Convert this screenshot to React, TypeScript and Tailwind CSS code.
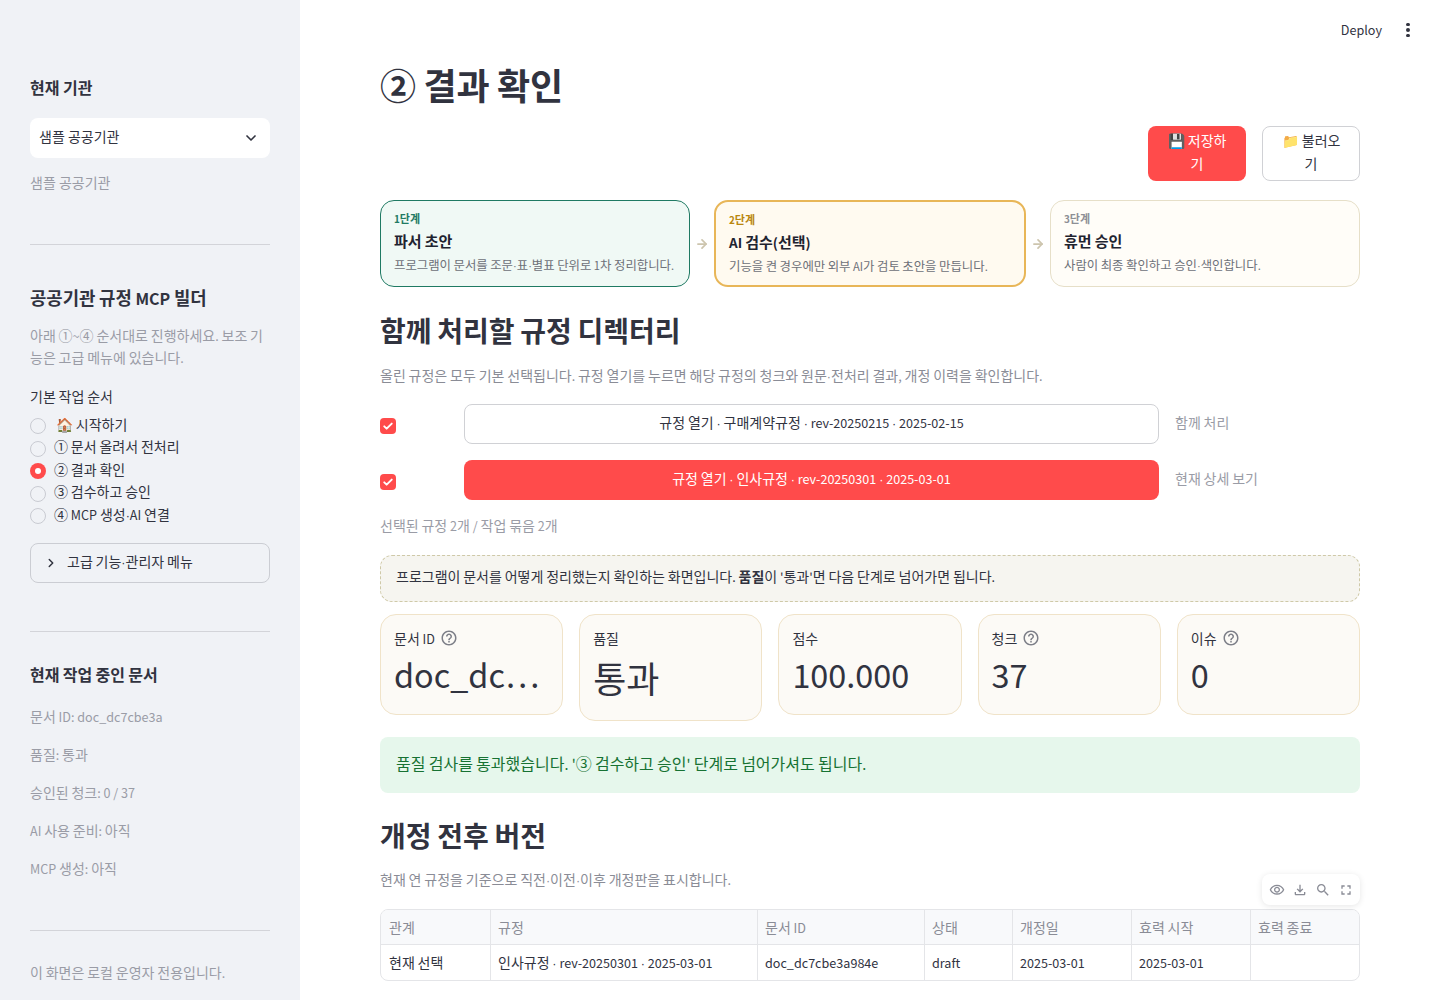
import { ChevronDown, ChevronRight, ArrowRight } from 'lucide-react';
import type { ReactNode } from 'react';

const font = "font-['Noto_Sans_CJK_KR','Noto_Sans',sans-serif]";

// latin runs in the CJK face come out too big, so scale them back down
function t(text: string): ReactNode[] {
  return text.split(/([\x20-\x7e…]+|·)/).map((part, i) => {
    if (part === '·') return <span key={i} className="font-['Liberation_Sans'] text-[0.9em] leading-none">·</span>;
    if (/^[\x20-\x7e…]+$/.test(part)) return <span key={i} className="text-[0.9em] leading-none">{part}</span>;
    return part;
  });
}

const steps = [
  { label: '🏠 시작하기', indent: true },
  { label: '① 문서 올려서 전처리' },
  { label: '② 결과 확인', active: true },
  { label: '③ 검수하고 승인' },
  { label: '④ MCP 생성·AI 연결' },
];

const docInfo = ['문서 ID: doc_dc7cbe3a', '품질: 통과', '승인된 청크: 0 / 37', 'AI 사용 준비: 아직', 'MCP 생성: 아직'];

const metrics = [
  { label: '문서 ID', value: 'doc_dc…', help: true },
  { label: '품질', value: '통과', tall: true },
  { label: '점수', value: '100.000' },
  { label: '청크', value: '37', help: true },
  { label: '이슈', value: '0', help: true },
];

const columns = ['관계', '규정', '문서 ID', '상태', '개정일', '효력 시작', '효력 종료'];
const row = ['현재 선택', '인사규정 · rev-20250301 · 2025-03-01', 'doc_dc7cbe3a984e', 'draft', '2025-03-01', '2025-03-01', ''];

function Icon({ d, className }: { d: string; className: string }) {
  return (
    <svg viewBox="0 0 24 24" className={className} fill="currentColor">
      <path d={d} />
    </svg>
  );
}

function Sidebar() {
  return (
    <aside className="w-[300px] h-full shrink-0 bg-[#f0f2f6] px-[30px] pt-[75px] text-[#31333f]">
      <h3 className="text-base leading-6 font-semibold">현재 기관</h3>
      <div className="mt-[19px] h-10 bg-white rounded-lg pl-[9px] pr-[11px] flex items-center justify-between text-sm">
        <span className="mb-1">샘플 공공기관</span>
        <ChevronDown className="w-4 h-4" strokeWidth={2.5} />
      </div>
      <p className="mt-[14px] text-sm leading-[20px] text-[#9a9ca6]">샘플 공공기관</p>
      <hr className="mt-[52px] border-[#d3d4d9]" />

      <h3 className="mt-[40px] text-[17.8px] leading-6 font-semibold">{t('공공기관 규정 MCP 빌더')}</h3>
      <p className="mt-[15px] text-sm leading-[22.4px] text-[#9a9ca6]">{t('아래 ①~④ 순서대로 진행하세요. 보조 기능은 고급 메뉴에 있습니다.')}</p>

      <p className="mt-[17px] text-sm leading-5">{t('기본 작업 순서')}</p>
      <ul className="mt-[9px]">
        {steps.map((step) => (
          <li key={step.label} className="h-[22.5px] flex items-center text-sm">
            {step.active ? (
              <span className="w-4 h-4 rounded-full bg-[#ff4b4b] flex items-center justify-center">
                <span className="w-1.5 h-1.5 rounded-full bg-white" />
              </span>
            ) : (
              <span className="w-4 h-4 rounded-full border border-[#c9cbd2] bg-[#f0f2f6]" />
            )}
            <span className={`mb-[5px] ${step.indent ? 'ml-[10px]' : 'ml-2'}`}>{t(step.label)}</span>
          </li>
        ))}
      </ul>

      <div className="mt-[16px] h-10 rounded-lg border border-[#cbcdd3] flex items-center pl-[13px] text-sm">
        <ChevronRight className="w-3.5 h-3.5" strokeWidth={2.5} />
        <span className="ml-[9px] mb-1">{t('고급 기능·관리자 메뉴')}</span>
      </div>
      <hr className="mt-12 border-[#d3d4d9]" />

      <h3 className="mt-[30px] text-base leading-6 font-semibold">{t('현재 작업 중인 문서')}</h3>
      <div className="mt-[20px] text-sm text-[#9a9ca6]">
        {docInfo.map((line) => (
          <p key={line} className="h-[38px] leading-5">{t(line)}</p>
        ))}
      </div>
      <hr className="mt-[34px] border-[#d3d4d9]" />
      <p className="mt-[31px] text-sm leading-5 text-[#9a9ca6]">{t('이 화면은 로컬 운영자 전용입니다.')}</p>
    </aside>
  );
}

function StageCard({ tag, title, desc, className, tagClass }: { tag: string; title: string; desc: string; className: string; tagClass: string }) {
  return (
    <div className={`flex-1 h-[87px] rounded-[14px] px-[13px] pt-[8px] ${className}`}>
      <p className={`text-[11px] leading-[18px] font-semibold ${tagClass}`}>{t(tag)}</p>
      <p className="mt-[3px] text-[15px] leading-[22px] font-semibold text-[#1f2430]">{t(title)}</p>
      <p className="mt-[3px] text-[12.4px] leading-[20px] text-[#6d7078] whitespace-nowrap">{t(desc)}</p>
    </div>
  );
}

function Arrow() {
  return (
    <span className="w-6 shrink-0 flex justify-center text-[#cdc5ae]">
      <ArrowRight className="w-3.5 h-3.5" strokeWidth={3} />
    </span>
  );
}

function DirectoryRow({ label, note, primary }: { label: string; note: string; primary?: boolean }) {
  return (
    <div className="flex items-center gap-4">
      <span className="w-[68px] shrink-0 pt-1">
        <span className="w-4 h-4 rounded bg-[#ff4b4b] flex items-center justify-center">
          <svg viewBox="0 0 16 16" className="w-3 h-3" fill="none" stroke="white" strokeWidth="2.6" strokeLinecap="round" strokeLinejoin="round">
            <path d="M3 8.5l3.2 3L13 4.8" />
          </svg>
        </span>
      </span>
      <button
        className={`w-[695px] h-10 pb-1 rounded-lg text-sm flex items-center justify-center ${
          primary ? 'bg-[#ff4b4b] text-white' : 'bg-white border border-[#d0d1d5] text-[#31333f]'
        }`}
      >
        <span>{t(label)}</span>
      </button>
      <span className="mb-1 text-sm text-[#9a9ca6]">{t(note)}</span>
    </div>
  );
}

const helpPath = 'M11 18h2v-2h-2v2zm1-16C6.48 2 2 6.48 2 12s4.48 10 10 10 10-4.48 10-10S17.52 2 12 2zm0 18c-4.41 0-8-3.59-8-8s3.59-8 8-8 8 3.59 8 8-3.59 8-8 8zm0-14c-2.21 0-4 1.79-4 4h2c0-1.1.9-2 2-2s2 .9 2 2c0 2-3 1.75-3 5h2c0-2.25 3-2.5 3-5 0-2.21-1.79-4-4-4z';

function Metric({ label, value, help, tall }: { label: string; value: string; help?: boolean; tall?: boolean }) {
  return (
    <div className="rounded-2xl border border-[#f0e3c9] bg-[#fcfaf6] pl-[13px] pr-2 pt-[11px] self-start">
      <div className="h-[24px] flex items-center text-sm text-[#31333f]">
        <span>{t(label)}</span>
        {help && <Icon d={helpPath} className="w-[18px] h-[18px] ml-[5px] text-[#7d7f88]" />}
      </div>
      <div className={`text-[36px] text-[#31333f] whitespace-nowrap ${tall ? 'leading-[54px] pb-[16px]' : 'leading-[44px] pb-[20px]'}`}>{t(value)}</div>
    </div>
  );
}

export default function App() {
  return (
    <div className={`h-screen overflow-hidden flex bg-white ${font}`}>
      <Sidebar />
      <main className="flex-1 min-w-0">
        <header className="h-[58px] flex items-center justify-end pr-[24px] text-[#31333f]">
          <span className="text-sm">{t('Deploy')}</span>
          <span className="ml-[18px] w-4 flex flex-col items-center gap-[2px] mt-[2px]">
            <span className="w-[3.5px] h-[3.5px] rounded-full bg-[#31333f]" />
            <span className="w-[3.5px] h-[3.5px] rounded-full bg-[#31333f]" />
            <span className="w-[3.5px] h-[3.5px] rounded-full bg-[#31333f]" />
          </span>
        </header>

        <div className="px-[80px] text-[#31333f]">
          <h1 className="h-[52px] text-[36px] leading-[52px] font-bold">{t('② 결과 확인')}</h1>

          <div className="mt-[16px] flex justify-end gap-4">
            <button className="w-[98px] h-[55px] px-4 pb-1 rounded-lg bg-[#ff4b4b] text-white text-sm leading-[23px]">💾 저장하기</button>
            <button className="w-[98px] h-[55px] px-4 pb-1 rounded-lg border border-[#d0d1d5] bg-white text-sm leading-[23px]">📁 불러오기</button>
          </div>

          <div className="mt-[19px] flex items-center">
            <StageCard tag="1단계" title="파서 초안" desc="프로그램이 문서를 조문·표·별표 단위로 1차 정리합니다." className="border border-[#1f7a63] bg-[#f0f9f5]" tagClass="text-[#1f7a63]" />
            <Arrow />
            <StageCard tag="2단계" title="AI 검수(선택)" desc="기능을 켠 경우에만 외부 AI가 검토 초안을 만듭니다." className="border-2 border-[#e8b658] bg-[#fffaf0]" tagClass="text-[#b9860f]" />
            <Arrow />
            <StageCard tag="3단계" title="휴먼 승인" desc="사람이 최종 확인하고 승인·색인합니다." className="border border-[#e6dfc8] bg-[#fffdf8]" tagClass="text-[#8d8f95]" />
          </div>

          <h2 className="mt-[23px] h-10 text-[28px] leading-10 font-bold">{t('함께 처리할 규정 디렉터리')}</h2>
          <p className="mt-[15px] text-sm leading-[20px] text-[#8a8c96]">{t('올린 규정은 모두 기본 선택됩니다. 규정 열기를 누르면 해당 규정의 청크와 원문·전처리 결과, 개정 이력을 확인합니다.')}</p>

          <div className="mt-[19px] flex flex-col gap-4">
            <DirectoryRow label="규정 열기 · 구매계약규정 · rev-20250215 · 2025-02-15" note="함께 처리" />
            <DirectoryRow label="규정 열기 · 인사규정 · rev-20250301 · 2025-03-01" note="현재 상세 보기" primary />
          </div>

          <p className="mt-[15px] text-sm leading-5 text-[#9a9ca6]">{t('선택된 규정 2개 / 작업 묶음 2개')}</p>

          <div className="mt-[20px] h-[47px] pb-[6px] rounded-xl border border-dashed border-[#cfc9a8] bg-[#f6f5f0] px-[15px] flex items-center text-sm">
            <span>{t('프로그램이 문서를 어떻게 정리했는지 확인하는 화면입니다. ')}<b className="font-semibold">품질</b>{t("이 '통과'면 다음 단계로 넘어가면 됩니다.")}</span>
          </div>

          <div className="mt-[12px] grid grid-cols-5 gap-4">
            {metrics.map((m) => (
              <Metric key={m.label} {...m} />
            ))}
          </div>

          <div className="mt-[16px] h-14 pb-1 rounded-lg bg-[#e6f7ec] px-4 flex items-center text-base text-[#177233]">
            <span>{t("품질 검사를 통과했습니다. '③ 검수하고 승인' 단계로 넘어가셔도 됩니다.")}</span>
          </div>

          <h2 className="mt-[22px] h-10 text-[28px] leading-10 font-bold">{t('개정 전후 버전')}</h2>
          <p className="mt-[14px] text-sm leading-5 text-[#8a8c96]">{t('현재 연 규정을 기준으로 직전·이전·이후 개정판을 표시합니다.')}</p>

          <div className="relative mt-[20px]">
            <div className="absolute right-0 -top-[35px] h-[31px] w-[98px] rounded-lg bg-white shadow-[0_1px_6px_rgba(0,0,0,0.1)] flex items-center justify-center gap-[7px] text-[#8a8c96]">
              <Icon className="w-4 h-4" d="M12 6c3.79 0 7.17 2.13 8.82 5.5C19.17 14.87 15.79 17 12 17s-7.17-2.13-8.82-5.5C4.83 8.13 8.21 6 12 6m0-2C7 4 2.73 7.11 1 11.5 2.73 15.89 7 19 12 19s9.27-3.11 11-7.5C21.27 7.11 17 4 12 4zm0 5c1.38 0 2.5 1.12 2.5 2.5S13.38 14 12 14s-2.5-1.12-2.5-2.5S10.62 9 12 9m0-2c-2.48 0-4.5 2.02-4.5 4.5S9.52 16 12 16s4.5-2.02 4.5-4.5S14.48 7 12 7z" />
              <Icon className="w-4 h-4" d="M18 15v3H6v-3H4v3c0 1.1.9 2 2 2h12c1.1 0 2-.9 2-2v-3h-2zm-1-4l-1.41-1.41L13 12.17V4h-2v8.17L8.41 9.59 7 11l5 5 5-5z" />
              <Icon className="w-4 h-4" d="M15.5 14h-.79l-.28-.27C15.41 12.59 16 11.11 16 9.5 16 5.91 13.09 3 9.5 3S3 5.91 3 9.5 5.91 16 9.5 16c1.61 0 3.09-.59 4.23-1.57l.27.28v.79l5 4.99L20.49 19l-4.99-5zm-6 0C7.01 14 5 11.99 5 9.5S7.01 5 9.5 5 14 7.01 14 9.5 11.99 14 9.5 14z" />
              <Icon className="w-4 h-4" d="M7 14H5v5h5v-2H7v-3zm-2-4h2V7h3V5H5v5zm12 7h-3v2h5v-5h-2v3zM14 5v2h3v3h2V5h-5z" />
            </div>
            <div className="rounded-lg border border-[#e4e5e8] overflow-hidden text-sm grid grid-cols-[109px_267px_167px_88px_119px_119px_1fr]">
              {columns.map((c, i) => (
                <div key={c} className={`h-[35px] flex items-center bg-[#f8f9fb] text-[#8a8c96] border-b border-[#e4e5e8] ${i ? 'border-l px-[7px]' : 'px-2'}`}><span>{t(c)}</span></div>
              ))}
              {row.map((c, i) => (
                <div key={i} className={`h-[35px] pb-[2px] flex items-center whitespace-nowrap ${i ? 'border-l border-[#e4e5e8] px-[7px]' : 'px-2'}`}><span>{t(c)}</span></div>
              ))}
            </div>
          </div>
        </div>
      </main>
    </div>
  );
}
